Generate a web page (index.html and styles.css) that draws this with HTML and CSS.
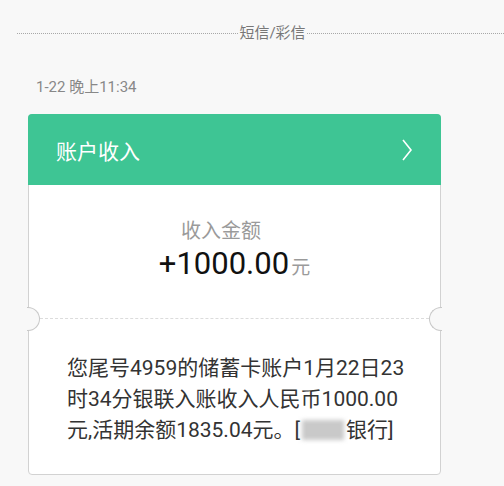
FILE: index.html
```html
<!DOCTYPE html>
<html lang="zh-CN">
<head>
    <meta charset="UTF-8">
    <meta name="viewport" content="width=device-width, initial-scale=1.0">
    <title>短信</title>
    <link rel="stylesheet" href="styles.css">
</head>
<body>
    <div class="divider"><span>短信/彩信</span></div>

    <p class="time">1-22 晚上11:34</p>

    <div class="card">
        <div class="card-head">
            <span>账户收入</span>
            <svg class="chevron" width="12" height="24" viewBox="0 0 12 24">
                <path d="M2 2 L10 12 L2 22" fill="none" stroke="#fff" stroke-width="1.6"/>
            </svg>
        </div>

        <div class="amount">
            <p class="amount-label">收入金额</p>
            <p class="amount-value">+1000.00<span class="unit">元</span></p>
        </div>

        <div class="cut">
            <span class="notch left"></span>
            <span class="notch right"></span>
        </div>

        <p class="message">您尾号4959的储蓄卡账户1月22日23时34分银联入账收入人民币1000.00元,活期余额1835.04元。[<span class="blur"></span>银行]</p>
    </div>
</body>
</html>
```

FILE: styles.css
```css
body {
  margin: 0;
  overflow-x: hidden;
  font-family: Roboto, "Noto Sans CJK SC", sans-serif;
  background-color: #f8f8f8;
  color: #333;
}

p {
  margin: 0;
}

.divider {
  display: flex;
  align-items: center;
  margin: 23px -24px 0 0;
  padding-left: 17px;
  font-size: 15px;
  line-height: 20px;
  color: #777;
}

.divider::before,
.divider::after {
  content: "";
  flex: 1;
  border-top: 1px dotted #a8a8a8;
}

.divider span {
  margin: 0 1px;
}

.time {
  margin-top: 34px;
  padding-left: 36px;
  font-size: 15px;
  line-height: 20px;
  color: #888;
}

.card {
  position: relative;
  width: 411px;
  margin: 17px 0 0 28px;
  background: #fff;
  border: 1px solid #d2d2d2;
  border-radius: 4px;
}

.card-head {
  display: flex;
  align-items: center;
  justify-content: space-between;
  height: 71px;
  margin: -1px -1px 0 -1px;
  padding: 0 28px 0 28px;
  background: #3ec594;
  border-radius: 4px 4px 0 0;
  color: #fff;
  font-size: 21px;
}

.chevron {
  display: block;
}

.amount {
  padding: 32px 0 31px;
  text-align: center;
}

.amount-label {
  padding-right: 27px;
  font-size: 20px;
  line-height: 28px;
  color: #9a9a9a;
}

.amount-value {
  font-size: 31px;
  line-height: 38px;
  color: #111;
}

.unit {
  margin-left: 2px;
  font-size: 19px;
  color: #9a9a9a;
}

.cut {
  position: relative;
  margin: 0 11px;
  border-top: 1px dashed #dcdcdc;
}

.notch {
  position: absolute;
  top: -12px;
  width: 12px;
  height: 22px;
  background: #f8f8f8;
  border: 1px solid #c8c8c8;
}

.notch.left {
  left: -13px;
  border-left: none;
  border-radius: 0 12px 12px 0;
}

.notch.right {
  right: -13px;
  border-right: none;
  border-radius: 12px 0 0 12px;
}

.message {
  padding: 34px 24px 28px 38px;
  font-size: 21px;
  line-height: 31px;
  color: #333;
}

.blur {
  display: inline-block;
  width: 42px;
  height: 20px;
  margin: 0 2px;
  vertical-align: -3px;
  background: #c9c9c9;
  filter: blur(2px);
}
```
